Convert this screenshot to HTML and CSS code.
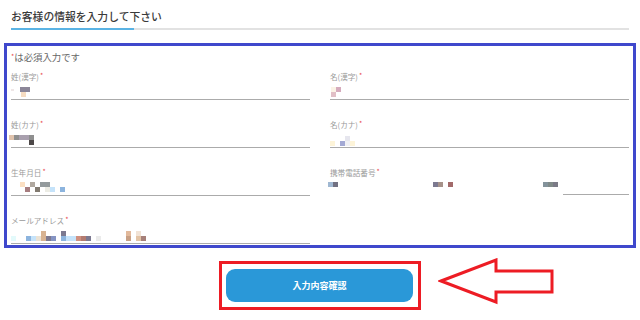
FILE: index.html
```html
<!DOCTYPE html>
<html lang="ja">
<head>
<meta charset="utf-8">
<link rel="stylesheet" href="styles.css">
</head>
<body>
<div class="page">
  <div class="heading">
    <h2 class="title">お客様の情報を入力して下さい</h2>
    <div class="rule"><div class="rule-active"></div></div>
  </div>

  <form class="form-box">
    <p class="note"><span class="req">*</span>は必須入力です</p>
    <div class="grid">
      <div class="field">
        <label class="label">姓(漢字)<span class="req">*</span></label>
        <div class="input">
          <div class="mosaic m-r1l">
            <div class="mrow"><i class="c-pale"></i><i class="gap"></i><i class="c-gy"></i><i class="c-gy"></i></div>
            <div class="mrow"><i class="gap"></i><i class="gap"></i><i class="c-tan"></i></div>
          </div>
        </div>
      </div>
      <div class="field">
        <label class="label">名(漢字)<span class="req">*</span></label>
        <div class="input">
          <div class="mosaic m-r1r">
            <div class="mrow"><i class="c-cream"></i><i class="c-pink"></i></div>
            <div class="mrow"><i class="c-pink2"></i></div>
          </div>
        </div>
      </div>

      <div class="field">
        <label class="label">姓(カナ)<span class="req">*</span></label>
        <div class="input">
          <div class="mosaic m-r2l">
            <div class="mrow"><i class="c-tan2"></i><i class="c-gy2"></i><i class="c-lav"></i><i class="c-lav"></i><i class="c-gy2"></i></div>
            <div class="mrow"><i class="gap"></i><i class="gap"></i><i class="gap"></i><i class="gap"></i><i class="c-dk"></i></div>
          </div>
        </div>
      </div>
      <div class="field">
        <label class="label">名(カナ)<span class="req">*</span></label>
        <div class="input">
          <div class="mosaic m-r2r">
            <div class="mrow"><i class="gap"></i><i class="gap"></i><i class="gap"></i><i class="c-ltg"></i></div>
            <div class="mrow"><i class="c-yel"></i><i class="gap"></i><i class="c-blu"></i><i class="c-ltg2"></i><i class="c-yel"></i></div>
          </div>
        </div>
      </div>

      <div class="field">
        <label class="label">生年月日<span class="req">*</span></label>
        <div class="input">
          <div class="mosaic m-r3l">
            <div class="mrow"><i class="gap"></i><i class="c-peach"></i><i class="gap"></i><i class="c-tg"></i><i class="gap"></i><i class="c-sg"></i><i class="c-sg"></i></div>
            <div class="mrow"><i class="gap"></i><i class="gap"></i><i class="c-rose"></i><i class="gap"></i><i class="c-brn"></i><i class="gap"></i><i class="c-eg"></i><i class="c-sky"></i><i class="gap"></i><i class="c-sky2"></i></div>
          </div>
        </div>
      </div>
      <div class="field">
        <label class="label">携帯電話番号<span class="req">*</span></label>
        <div class="phone">
          <div class="ph-part ph1"><i class="c-sky3"></i><i class="c-slate"></i></div>
          <div class="ph-part ph2"><i class="c-slate2"></i><i class="c-taupe"></i><i class="gap"></i><i class="c-red"></i></div>
          <div class="ph-part ph3"><i class="c-teal"></i><i class="c-teal2"></i><i class="c-slate3"></i></div>
          <div class="ph-line"></div>
        </div>
      </div>

      <div class="field">
        <label class="label">メールアドレス<span class="req">*</span></label>
        <div class="input">
          <div class="mosaic m-r4l">
            <div class="mrow"><i class="gap"></i><i class="gap"></i><i class="gap"></i><i class="gap"></i><i class="gap"></i><i class="gap"></i><i class="c-sand"></i><i class="gap"></i><i class="gap"></i><i class="gap"></i><i class="c-slate2"></i><i class="gap"></i><i class="gap"></i><i class="gap"></i><i class="gap"></i><i class="gap"></i><i class="gap"></i><i class="gap"></i><i class="gap"></i><i class="gap"></i><i class="gap"></i><i class="gap"></i><i class="gap"></i><i class="c-sand2"></i><i class="gap"></i><i class="c-bisque"></i></div>
            <div class="mrow"><i class="c-ice"></i><i class="gap"></i><i class="gap"></i><i class="c-sky2"></i><i class="c-sky"></i><i class="c-eg2"></i><i class="c-sand"></i><i class="c-slate2"></i><i class="c-peri"></i><i class="gap"></i><i class="c-sky2"></i><i class="c-sky"></i><i class="c-sky"></i><i class="c-clay"></i><i class="c-clay2"></i><i class="c-slate2"></i><i class="gap"></i><i class="c-eg3"></i><i class="gap"></i><i class="gap"></i><i class="gap"></i><i class="gap"></i><i class="gap"></i><i class="c-camel"></i><i class="gap"></i><i class="c-sand3"></i><i class="c-mauve"></i></div>
          </div>
        </div>
      </div>
      <div class="field field-empty"></div>
    </div>
  </form>

  <div class="submit-row">
    <div class="submit-frame">
      <button type="button" class="submit">入力内容確認</button>
    </div>
  </div>

  <svg class="arrow" width="124" height="52" viewBox="0 0 124 52" aria-hidden="true">
    <polygon points="3,23 58,2 58,13 114,13 114,34 58,34 58,44" fill="#ffffff" stroke="#ed1c24" stroke-width="3" stroke-linejoin="miter"/>
  </svg>
</div>
</body>
</html>
```
FILE: styles.css
```css
* { box-sizing: border-box; }
html, body { margin: 0; padding: 0; background: #ffffff; }
body {
  font-family: "Noto Sans CJK JP", "Noto Sans", sans-serif;
  color: #444;
  width: 640px;
  height: 320px;
  overflow: hidden;
}
.page { position: relative; width: 640px; height: 320px; }

.heading { padding: 7px 0 0 11px; }
.title {
  margin: 0;
  font-size: 10.8px;
  line-height: 18px;
  font-weight: 500;
  color: #3a3a3a;
}
.rule {
  margin-top: 3px;
  width: 618px;
  height: 2px;
  background: #e2e2e2;
}
.rule-active { width: 123px; height: 2px; background: #5ab3e4; }

.form-box {
  margin: 13px 0 0 4px;
  width: 632px;
  border: 3px solid #3f48cc;
  padding: 4px 3px 2px 4px;
}
.note {
  margin: 0 0 8px;
  font-size: 9.4px;
  line-height: 14px;
  height: 14px;
  color: #666;
}
.req { color: #e84a4a; font-size: 7px; vertical-align: 2px; margin-left: 1px; line-height: 1; }
.note .req { margin-left: 0; }

.grid {
  display: grid;
  grid-template-columns: 299px 299px;
  column-gap: 20px;
  row-gap: 21px;
}
.field { height: 27px; }
.label {
  display: block;
  font-size: 7.6px;
  line-height: 10px;
  height: 10px;
  color: #9a9a9a;
  white-space: nowrap;
}
.input {
  height: 18px;
  border-bottom: 1px solid #ababab;
  padding-top: 4px;
}
.mosaic { display: flex; flex-direction: column; }
.mrow { display: flex; height: 5px; }
.mrow i, .ph-part i { display: block; width: 5px; height: 5px; flex: none; }
.gap { background: transparent; }
.m-r1l { padding-top: 1px; }
.m-r1l .c-pale { width: 3px; height: 2px; margin-top: 2px; }
.m-r1l .c-pale + .gap { width: 6px; }
.m-r1r { margin-left: 1px; padding-top: 1px; }
.m-r2l { margin-left: -2px; padding-top: 1px; }
.m-r2r { padding-top: 2px; }
.m-r3l { margin-left: 4px; padding-top: 0; }
.m-r4l { padding-top: 1px; }

.phone {
  display: flex;
  align-items: flex-start;
  height: 18px;
  padding-top: 2px;
}
.ph-part { display: flex; margin-top: 2px; }
.ph1 { margin-left: -2px; }
.ph2 { margin-left: 95px; }
.ph3 { margin-left: 90px; }
.ph-line {
  margin-left: 5px;
  margin-top: 14px;
  width: 66px;
  height: 1px;
  background: #ababab;
}

.c-pale { background: #efe7e7; }
.c-gy { background: #8b8699; }
.c-tan { background: #f6dcc2; }
.c-cream { background: #fbf3e6; }
.c-pink { background: #d5abbd; }
.c-pink2 { background: #e1bfc6; }
.c-tan2 { background: #e0c3ad; }
.c-gy2 { background: #8f8f8f; }
.c-lav { background: #a9a0ae; }
.c-dk { background: #4d4848; }
.c-ltg { background: #e6e6ee; }
.c-ltg2 { background: #f0f0f4; }
.c-yel { background: #fdf4d9; }
.c-blu { background: #a3a9d4; }
.c-peach { background: #fbdfc2; }
.c-tg { background: #b0a89f; }
.c-sg { background: #939a9c; }
.c-rose { background: #a77d7f; }
.c-brn { background: #827a70; }
.c-eg { background: #ecece4; }
.c-sky { background: #c5e3fa; }
.c-sky2 { background: #8cb4de; }
.c-sky3 { background: #a0b8d2; }
.c-slate { background: #727182; }
.c-slate2 { background: #7c7990; }
.c-slate3 { background: #7b7a86; }
.c-taupe { background: #a6928a; }
.c-red { background: #a26a6a; }
.c-teal { background: #84939b; }
.c-teal2 { background: #808a88; }
.c-sand { background: #d8b392; }
.c-sand2 { background: #e2b99b; }
.c-sand3 { background: #e3c4a6; }
.c-bisque { background: #f1e3d6; }
.c-ice { background: #e3fafb; }
.c-eg2 { background: #ebe2d4; }
.c-peri { background: #8594c3; }
.c-clay { background: #d0907f; }
.c-clay2 { background: #b37b70; }
.c-eg3 { background: #ebebeb; }
.c-camel { background: #c8a085; }
.c-mauve { background: #a6807a; }

.submit-row {
  display: flex;
  justify-content: center;
  margin-top: 13px;
}
.submit-frame {
  width: 202px;
  border: 3px solid #ed1c24;
  padding: 5px 5px 5px 4px;
}
.submit {
  display: block;
  width: 187px;
  height: 33px;
  border: none;
  border-radius: 9px;
  background: #2a98d8;
  color: #ffffff;
  font-family: "Noto Sans CJK JP", "Noto Sans", sans-serif;
  font-size: 9px;
  font-weight: 700;
  padding: 0;
}

.arrow {
  position: absolute;
  left: 438px;
  top: 258px;
}
```
